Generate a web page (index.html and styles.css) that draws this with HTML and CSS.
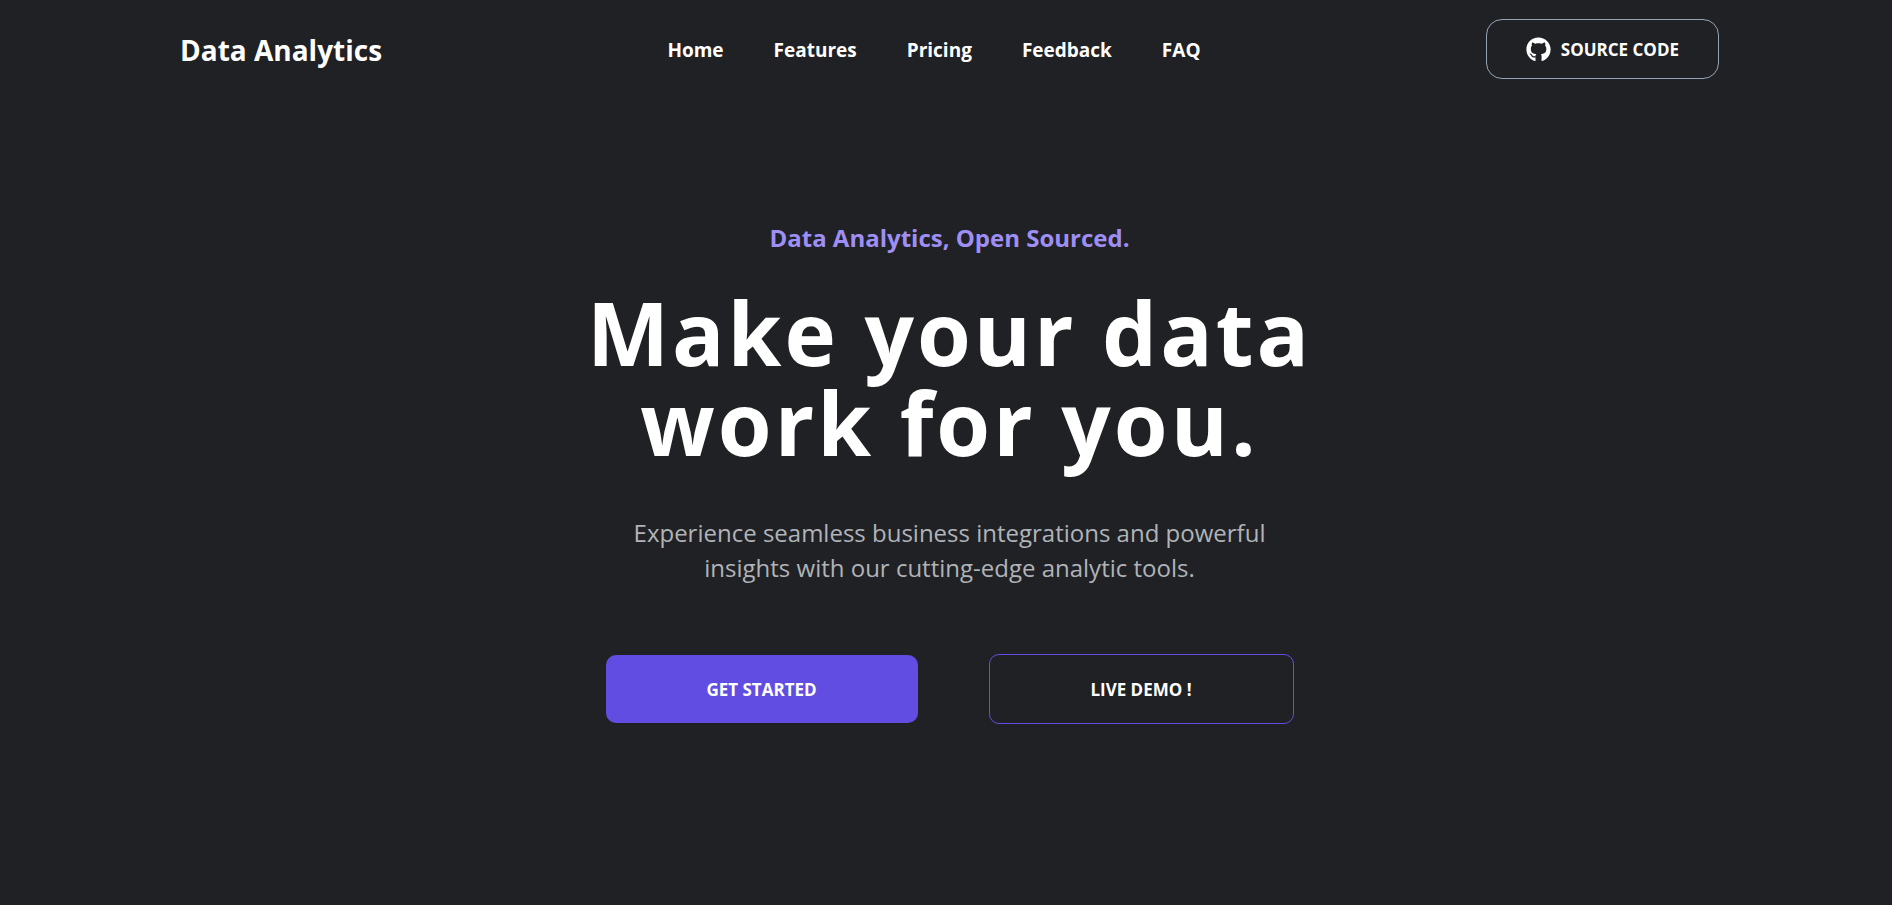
FILE: index.html
```html
<!DOCTYPE html>
<html lang="en">
<head>
<meta charset="utf-8">
<meta name="viewport" content="width=device-width, initial-scale=1">
<title>Data Analytics</title>
<link rel="stylesheet" href="styles.css">
</head>
<body>
<header class="site-header">
  <a class="brand" href="#">Data Analytics</a>
  <nav class="nav" aria-label="Main">
    <a href="#home">Home</a>
    <a href="#features">Features</a>
    <a href="#pricing">Pricing</a>
    <a href="#feedback">Feedback</a>
    <a href="#faq">FAQ</a>
  </nav>
  <a class="source" href="#source">
    <svg class="source-icon" viewBox="0 0 496 512" aria-hidden="true"><path fill="currentColor" d="M165.900 397.400c0 2-2.300 3.600-5.200 3.600-3.300.3-5.600-1.300-5.600-3.600 0-2 2.300-3.600 5.200-3.600 3-.3 5.600 1.300 5.600 3.600zm-31.100-4.500c-.7 2 1.300 4.300 4.300 4.900 2.600 1 5.600 0 6.200-2s-1.300-4.300-4.300-5.200c-2.600-.7-5.500.3-6.200 2.300zm44.200-1.700c-2.900.7-4.900 2.600-4.600 4.900.3 2 2.900 3.300 5.900 2.600 2.900-.7 4.900-2.600 4.600-4.600-.3-1.900-3-3.200-5.900-2.900zM244.800 8C106.100 8 0 113.300 0 252c0 110.900 69.800 205.800 169.500 239.200 12.800 2.300 17.300-5.600 17.300-12.100 0-6.200-.3-40.400-.3-61.400 0 0-70 15-84.700-29.800 0 0-11.400-29.100-27.800-36.600 0 0-22.900-15.700 1.600-15.400 0 0 24.900 2 38.600 25.800 21.900 38.600 58.600 27.500 72.900 20.900 2.300-16 8.800-27.100 16-33.700-55.900-6.200-112.300-14.300-112.300-110.500 0-27.500 7.600-41.300 23.600-58.900-2.600-6.500-11.100-33.300 2.600-67.900 20.900-6.500 69 27 69 27 20-5.600 41.500-8.500 62.800-8.500s42.800 2.900 62.800 8.500c0 0 48.100-33.600 69-27 13.700 34.700 5.200 61.400 2.600 67.900 16 17.700 25.800 31.500 25.800 58.900 0 96.500-58.900 104.200-114.800 110.500 9.200 7.900 17 22.900 17 46.400 0 33.700-.3 75.400-.3 83.600 0 6.500 4.600 14.400 17.300 12.100C428.200 457.800 496 362.900 496 252 496 113.300 383.500 8 244.800 8z"/></svg>
    <span>SOURCE CODE</span>
  </a>
</header>
<main class="hero" id="home">
  <p class="tagline">Data Analytics, Open Sourced.</p>
  <h1 class="title">Make your data work for you.</h1>
  <p class="lead">Experience seamless business integrations and powerful insights with our cutting-edge analytic tools.</p>
  <div class="actions">
    <button class="btn btn-primary" type="button">GET STARTED</button>
    <button class="btn btn-outline" type="button">LIVE DEMO !</button>
  </div>
</main>
</body>
</html>
```
FILE: styles.css
```css
* {
  box-sizing: border-box;
}

body {
  margin: 0;
  padding: 0 173px 0 180px;
  background: #202124;
  color: #fff;
  font-family: "Segoe UI", "Open Sans", "Noto Sans", sans-serif;
}

a {
  color: inherit;
  text-decoration: none;
}

.site-header {
  display: flex;
  flex-wrap: wrap;
  justify-content: space-between;
  align-items: center;
  gap: 20px;
  padding-top: 19px;
}

.brand,
.nav {
  padding-top: 2px;
  font-weight: 700;
}

.brand {
  font-size: 28px;
  line-height: 40px;
}

.nav {
  display: flex;
  flex-wrap: wrap;
  gap: 10px 50px;
  font-size: 19px;
}

.source {
  display: flex;
  align-items: center;
  gap: 10px;
  height: 60px;
  padding: 0 39px;
  border: 1px solid #94a3b8;
  border-radius: 16px;
  font-size: 17px;
  font-weight: 700;
}

.source-icon {
  width: 25px;
  height: 25px;
}

.hero {
  display: flex;
  flex-direction: column;
  align-items: center;
  padding: 139px 0 179px;
  text-align: center;
}

.tagline {
  margin: 0;
  color: #9f8ff5;
  font-size: 24px;
  font-weight: 700;
  line-height: 40px;
}

.title {
  max-width: 760px;
  margin: 29px 0 0;
  font-size: 87px;
  font-weight: 700;
  letter-spacing: 3px;
  line-height: 90px;
}

.lead {
  max-width: 640px;
  margin: 48px 0 0;
  color: #b0b3b8;
  font-size: 24px;
  line-height: 35px;
}

.actions {
  display: flex;
  flex-wrap: wrap;
  justify-content: center;
  align-items: center;
  gap: 20px 71px;
  margin-top: 69px;
}

.btn {
  border-radius: 10px;
  color: #fff;
  font-family: inherit;
  font-size: 17px;
  font-weight: 700;
  cursor: pointer;
}

.btn-primary {
  width: 312px;
  height: 68px;
  border: 0;
  background: #624de3;
}

.btn-outline {
  width: 305px;
  height: 70px;
  border: 1px solid #624de3;
  background: transparent;
}

@media (max-width: 1200px) {
  body {
    padding: 0 24px;
  }

  .hero {
    padding-top: 80px;
  }
}
```
